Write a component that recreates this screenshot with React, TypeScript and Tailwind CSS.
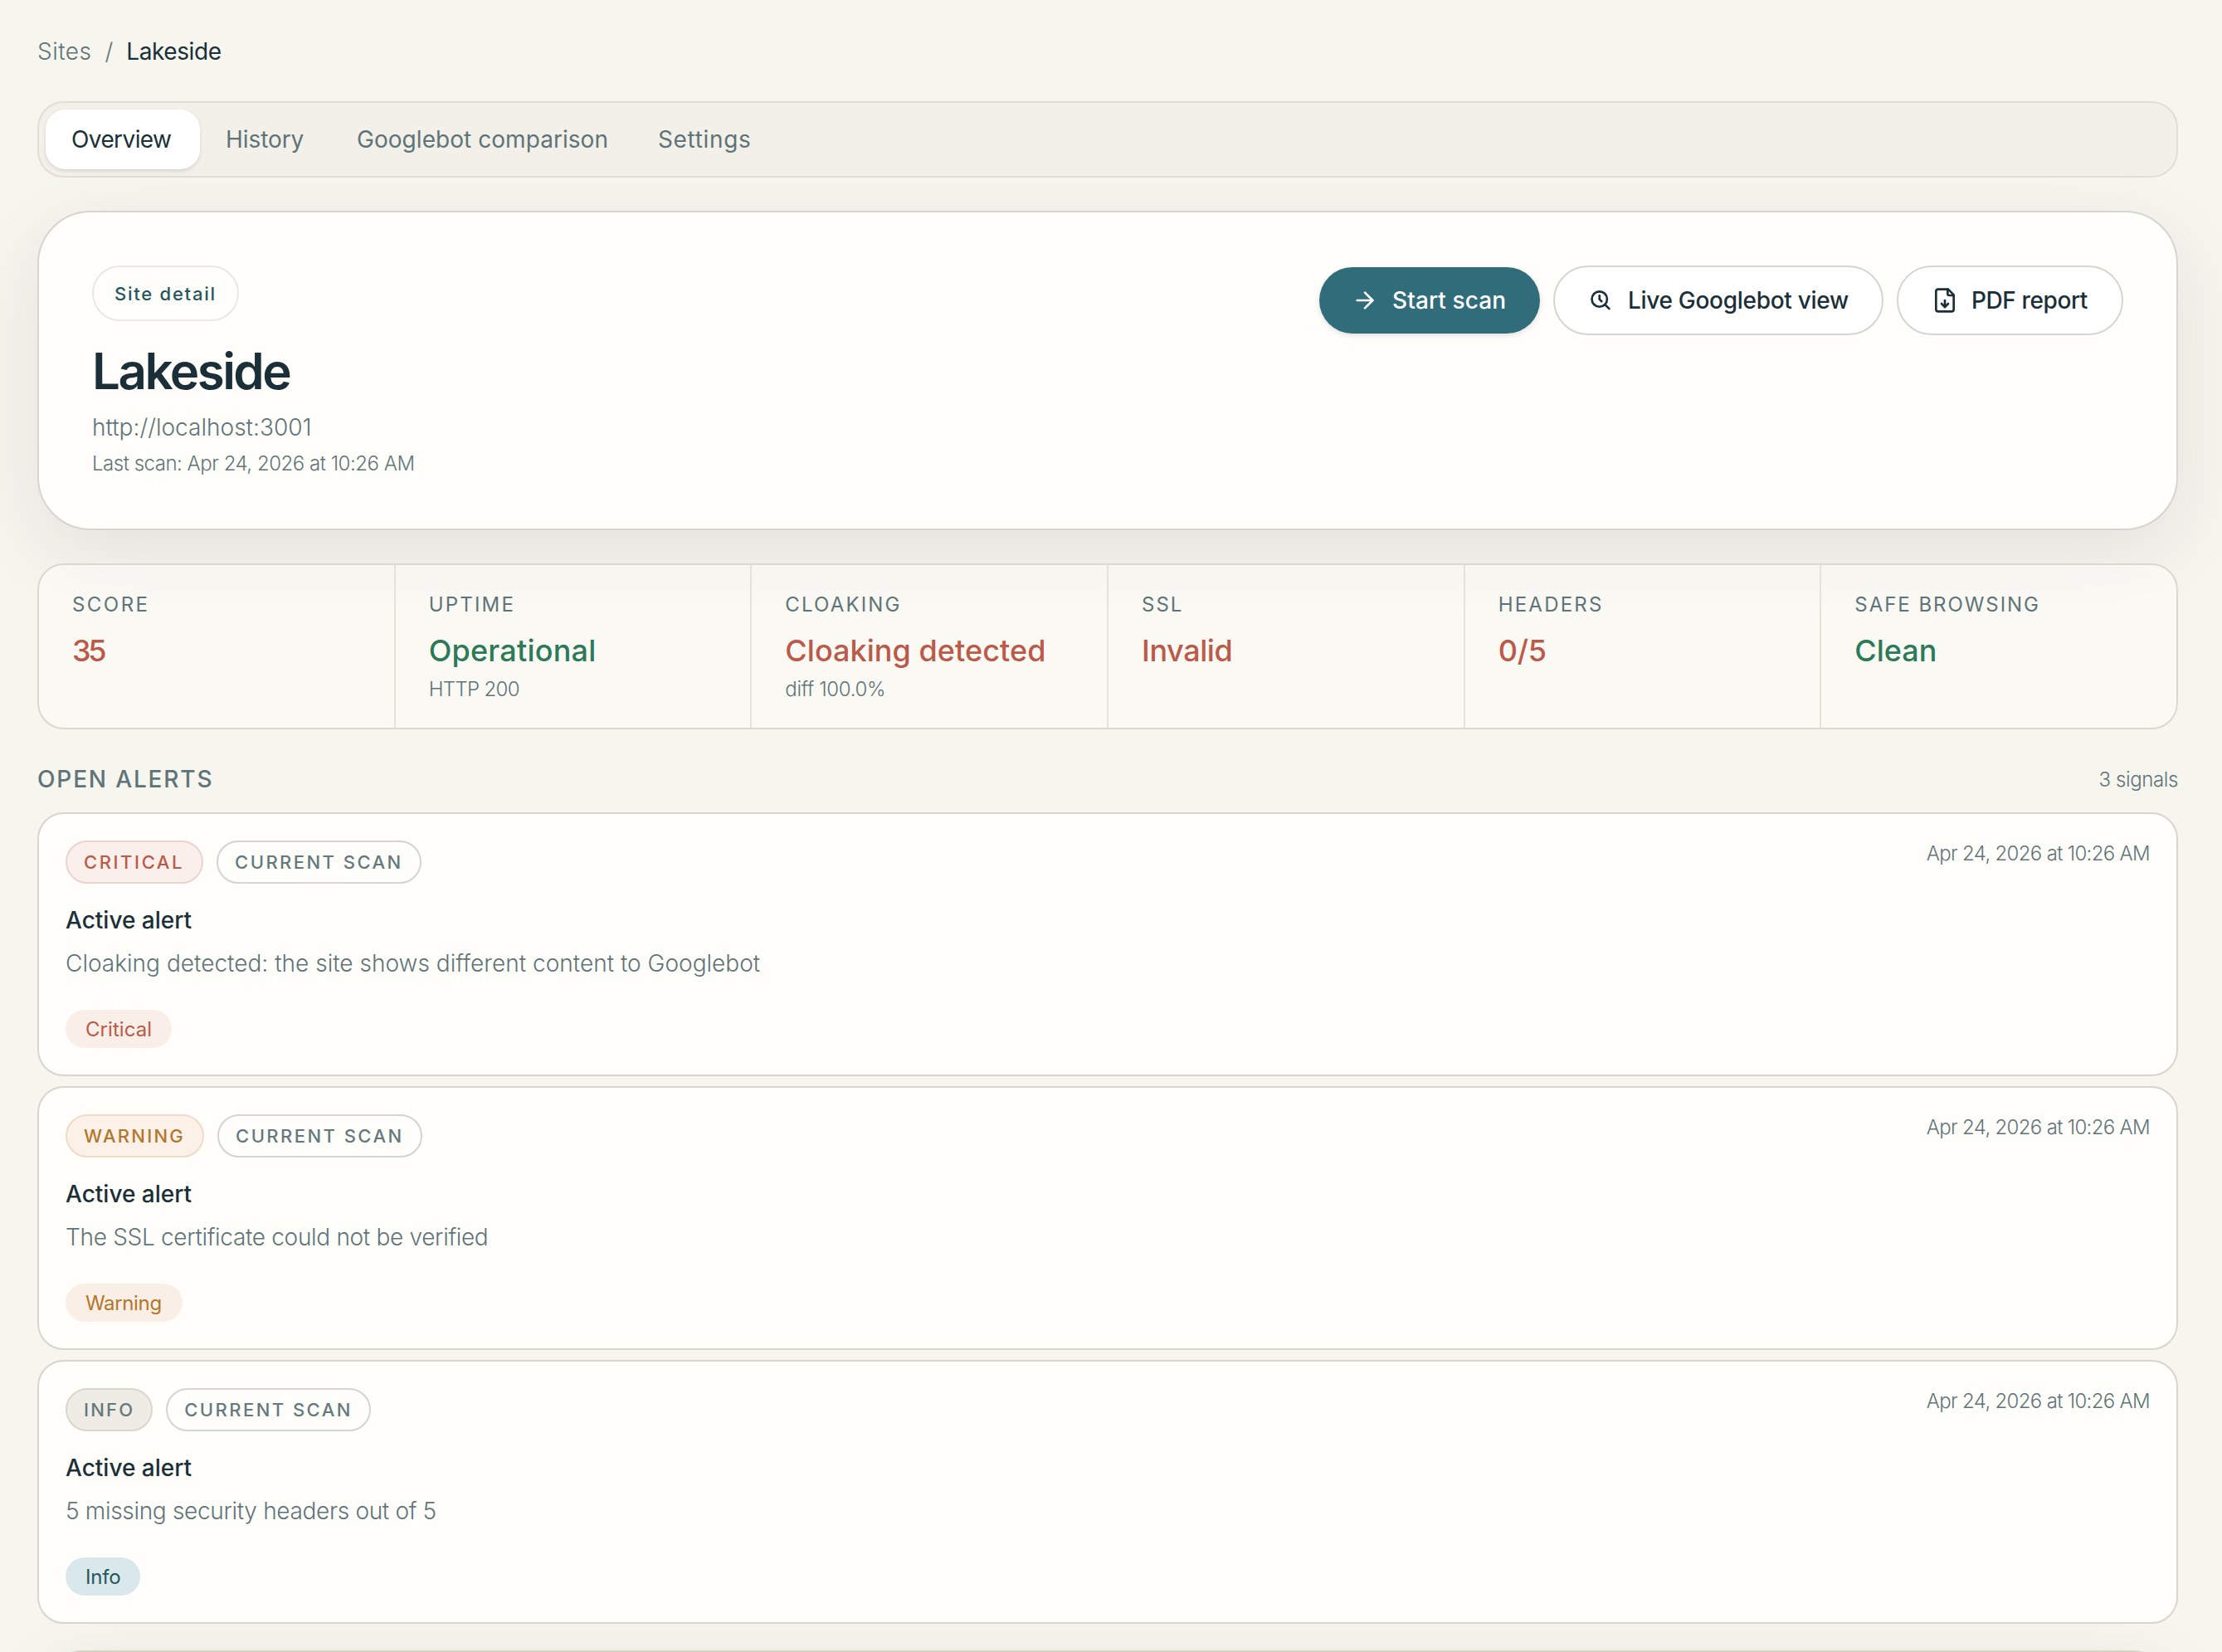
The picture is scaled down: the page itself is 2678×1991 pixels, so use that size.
import React from "react";
import clsx from "clsx";
import { ArrowRight } from "lucide-react";

const TABS = [
  { label: "Overview", active: true, className: "w-[186px] tracking-[-0.6px]" },
  { label: "History", active: false, className: "w-[158px] tracking-[-0.08px]" },
  { label: "Googlebot comparison", active: false, className: "w-[363px] tracking-[0.05px]" },
  { label: "Settings", active: false, className: "w-[174px] tracking-[0.65px]" },
];

const STATS = [
  { label: "SCORE", labelClass: "tracking-[2.45px]", value: "35", valueClass: "text-[#bb5a48] tracking-[-3.3px]" },
  { label: "UPTIME", labelClass: "tracking-[2.2px]", value: "Operational", valueClass: "text-[#2c7a58] tracking-[0.22px]", note: "HTTP 200", noteClass: "tracking-[-0.65px]" },
  { label: "CLOAKING", labelClass: "tracking-[2.15px]", value: "Cloaking detected", valueClass: "text-[#bb5a48] tracking-[0.05px]", note: "diff 100.0%", noteClass: "tracking-[-0.35px]" },
  { label: "SSL", labelClass: "tracking-[2px]", value: "Invalid", valueClass: "text-[#bb5a48] tracking-[-0.4px]" },
  { label: "HEADERS", labelClass: "tracking-[2.22px]", value: "0/5", valueClass: "text-[#bb5a48] tracking-[-0.19px]" },
  { label: "SAFE BROWSING", labelClass: "tracking-[1.95px]", value: "Clean", valueClass: "text-[#2c7a58]" },
];

const ALERTS = [
  {
    badge: "CRITICAL",
    badgeClass: "border-[#ecd3ce] bg-[#fbefeb] pr-[21px] text-[#bb5a48] tracking-[2.58px]",
    text: "Cloaking detected: the site shows different content to Googlebot",
    textClass: "tracking-[0.02px]",
    pill: "Critical",
    pillClass: "bg-[#f9eee8] text-[#bb5a48] tracking-[0.05px]",
  },
  {
    badge: "WARNING",
    badgeClass: "border-[#f0dcc6] bg-[#fcf1e9] pr-[21px] text-[#b4762a] tracking-[2.25px]",
    text: "The SSL certificate could not be verified",
    textClass: "tracking-[-0.31px]",
    pill: "Warning",
    pillClass: "bg-[#f9efe6] pr-[25px] text-[#b4762a] tracking-[-0.35px]",
  },
  {
    badge: "INFO",
    badgeClass: "border-[#d9d6cb] bg-[#efece5] pr-5 text-[#64797d] tracking-[2.2px]",
    text: "5 missing security headers out of 5",
    textClass: "tracking-[-0.32px]",
    pill: "Info",
    pillClass: "bg-[#d9e8eb] text-[#25565e] tracking-[-0.2px]",
  },
];

function SearchClockIcon() {
  return (
    <svg viewBox="0 0 24 24" className="size-8 shrink-0" fill="none" stroke="currentColor" strokeWidth={2} strokeLinecap="round" strokeLinejoin="round">
      <circle cx="10.3" cy="10.9" r="6.9" />
      <path d="m15.4 15.9 3.7 3.7" />
      <path d="M10.3 7.8v3.2l1.9 1.9" />
    </svg>
  );
}

function FileDownIcon() {
  return (
    <svg viewBox="0 0 24 24" className="size-8 shrink-0" fill="none" stroke="currentColor" strokeWidth={2} strokeLinecap="round" strokeLinejoin="round">
      <path d="M15 2H6a2 2 0 0 0-2 2v16a2 2 0 0 0 2 2h12a2 2 0 0 0 2-2V7Z" />
      <path d="M14.5 2v4a1.5 1.5 0 0 0 1.5 1.5h4" />
      <path d="M12 18v-6" />
      <path d="m9 15 3 3 3-3" />
    </svg>
  );
}

function Badge({ className, children }: { className: string; children: React.ReactNode }) {
  return (
    <span className={clsx("flex h-[52px] items-center rounded-full border-2 pl-5 text-[22px] font-medium", className)}>
      {children}
    </span>
  );
}

export default function App() {
  return (
    <div className="h-[1991px] overflow-hidden bg-[#f6f5ee] pl-[45px] pr-[53px] pt-[42px] font-['Inter',sans-serif] whitespace-nowrap text-[#1a2f38]">
      <nav className="flex gap-4 text-[28px] leading-[40px] text-[#5f7479]">
        <a className="font-light tracking-[0.5px]">Sites</a>
        <span className="font-light">/</span>
        <span className="font-normal tracking-[-0.42px] text-[#1a2f38]">Lakeside</span>
      </nav>

      <div className="mt-10 flex h-[92px] rounded-[32px] border-2 border-[#dfdfd7] bg-[#f2f0e8] p-2">
        {TABS.map((tab) => (
          <button
            key={tab.label}
            className={clsx(
              "flex h-[72px] items-center rounded-3xl pl-[31px] text-[28px]",
              tab.active ? "bg-white text-[#1a2f38] shadow-[0_2px_4px_rgba(26,47,56,0.14)]" : "text-[#5f7479]",
              tab.className,
            )}
          >
            {tab.label}
          </button>
        ))}
      </div>

      <section className="mt-10 flex h-[385px] items-start justify-between rounded-[64px] border-2 border-[#d6d6d0] bg-[#fffefb] p-16 shadow-[0_28px_96px_rgba(30,35,60,0.09)]">
        <div>
          <span className="inline-flex h-[67px] items-center rounded-full border-2 border-[#e8e9e6] px-[25px] pt-px align-top text-[22px] font-medium tracking-[1.75px] text-[#25565e]">
            Site detail
          </span>
          <h1 className="mt-[27px] text-[60px] font-semibold leading-[66px] tracking-[-2.5px]">Lakeside</h1>
          <p className="mt-3.5 text-[28px] font-light leading-[42px] tracking-[0.02px] text-[#5f7479]">http://localhost:3001</p>
          <p className="mt-[9px] text-[24px] font-light leading-[28px] tracking-[-0.48px] text-[#5f7479]">Last scan: Apr 24, 2026 at 10:26 AM</p>
        </div>
        <div className="flex items-center gap-4 text-[28px] font-medium">
          <button className="flex h-20 w-[266px] items-center gap-[17px] rounded-full bg-[#306c79] pl-[39px] tracking-[0.1px] text-white shadow-[0_2px_6px_rgba(26,47,56,0.15)]">
            <ArrowRight className="size-8 shrink-0" />
            Start scan
          </button>
          <button className="flex h-[84px] w-[398px] items-center gap-4 rounded-full border-2 border-[#d6d6d0] bg-white pl-10 tracking-[-0.3px]">
            <SearchClockIcon />
            Live Googlebot view
          </button>
          <button className="flex h-[84px] w-[273px] items-center gap-4 rounded-full border-2 border-[#d6d6d0] bg-white pl-10 tracking-[-0.4px]">
            <FileDownIcon />
            PDF report
          </button>
        </div>
      </section>

      <section className="mt-10 grid h-[200px] grid-cols-[repeat(5,430fr)_428fr] overflow-hidden rounded-[32px] border-2 border-[#d9d9d2] bg-[#fffefb]/50">
        {STATS.map((stat) => (
          <div key={stat.label} className="border-r-2 border-[#e4e2d9] pl-10 pt-8 last:border-r-0">
            <div className={clsx("text-[24px] leading-8 text-[#5f7479]", stat.labelClass)}>{stat.label}</div>
            <div className={clsx("mt-[15px] text-[36px] font-medium leading-[48px]", stat.valueClass)}>{stat.value}</div>
            {stat.note && (
              <div className={clsx("mt-[7px] text-[24px] font-light leading-8 text-[#5f7479]", stat.noteClass)}>{stat.note}</div>
            )}
          </div>
        ))}
      </section>

      <div className="mt-10 flex items-center justify-between leading-[40px] text-[#5f7479]">
        <h2 className="text-[28px] font-medium tracking-[1.85px]">OPEN ALERTS</h2>
        <span className="pt-px text-[24px] font-light leading-[39px] tracking-[-0.4px]">3 signals</span>
      </div>

      <div className="mt-5 flex flex-col gap-3">
        {ALERTS.map((alert) => (
          <article key={alert.badge} className="flex h-[318px] items-start justify-between rounded-[32px] border-2 border-[#d6d6d0] bg-[#fffefb] p-8">
            <div>
              <div className="flex gap-4">
                <Badge className={alert.badgeClass}>{alert.badge}</Badge>
                <Badge className="border-[#d3d5d0] pr-5 text-[#64797d] tracking-[2.45px]">CURRENT SCAN</Badge>
              </div>
              <h3 className="mt-6 text-[28px] font-medium leading-[40px]">Active alert</h3>
              <p className={clsx("mt-2 text-[28px] font-light leading-[48px] text-[#5f7479]", alert.textClass)}>{alert.text}</p>
              <span className={clsx("mt-8 inline-flex h-[46px] items-center rounded-full pl-6 pt-px align-top text-[24px]", alert.pill === "Warning" ? "" : "pr-6", alert.pillClass)}>
                {alert.pill}
              </span>
            </div>
            <time className="pt-px text-[24px] font-light leading-[30px] tracking-[-0.68px] text-[#5f7479]">Apr 24, 2026 at 10:26 AM</time>
          </article>
        ))}
      </div>

      <section className="mt-8 h-[300px] rounded-[56px] border-2 border-[#d6d3c9] bg-[#fffefb] shadow-[0_28px_96px_rgba(30,35,60,0.09)]" />
    </div>
  );
}
